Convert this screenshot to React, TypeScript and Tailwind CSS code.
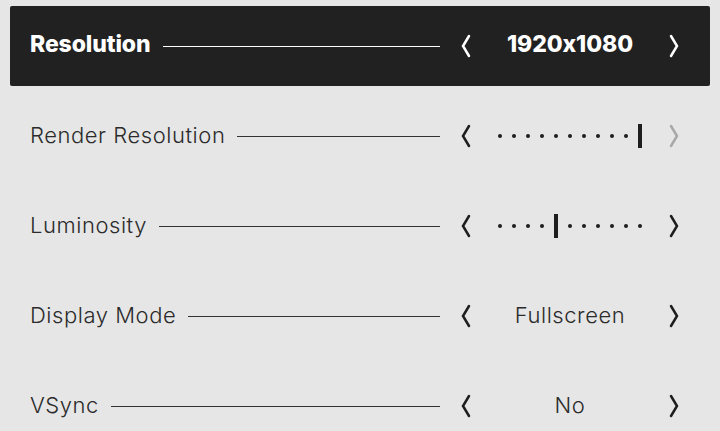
import React from 'react';

type Row = {
  label: string;
  kind: 'text' | 'slider';
  value?: string;
  pos?: number;
  nextDisabled?: boolean;
};

const rows: Row[] = [
  { label: 'Resolution', kind: 'text', value: '1920x1080' },
  { label: 'Render Resolution', kind: 'slider', pos: 10, nextDisabled: true },
  { label: 'Luminosity', kind: 'slider', pos: 4 },
  { label: 'Display Mode', kind: 'text', value: 'Fullscreen' },
  { label: 'VSync', kind: 'text', value: 'No' },
];

function Chevron({ dir, className }: { dir: 'left' | 'right'; className: string }) {
  return (
    <svg width="12" height="24" viewBox="0 0 12 24" className={className} fill="none">
      <path
        d={dir === 'left' ? 'M9 2 L3 12 L9 22' : 'M3 2 L9 12 L3 22'}
        stroke="currentColor"
        strokeWidth={2.5}
        strokeLinecap="round"
        strokeLinejoin="miter"
      />
    </svg>
  );
}

function Slider({ pos, active }: { pos: number; active: boolean }) {
  return (
    <div className="flex h-6 items-center gap-[10px]">
      {Array.from({ length: 11 }).map((_, i) =>
        i === pos ? (
          <span key={i} className={`h-6 w-1 ${active ? 'bg-white' : 'bg-[#1e1e1e]'}`} />
        ) : (
          <span key={i} className={`h-1 w-1 rounded-full ${active ? 'bg-white' : 'bg-[#1e1e1e]'}`} />
        )
      )}
    </div>
  );
}

export default function App() {
  return (
    <div
      className="h-[431px] w-[720px] overflow-hidden bg-[#e6e6e6] px-[10px] pt-[6px]"
      style={{ fontFamily: 'Inter, "Noto Sans", sans-serif', fontFeatureSettings: '"calt" 0' }}
    >
      <div className="flex flex-col gap-[10px]">
        {rows.map((row, idx) => {
          const active = idx === 0;
          return (
            <div
              key={row.label}
              className={`flex h-[80px] shrink-0 items-center rounded-[2px] pl-5 pr-[30px] ${
                active ? 'bg-[#212121] text-white' : 'text-[#2b2b2b]'
              }`}
            >
              <span
                className={`pb-[3px] leading-none ${
                  active ? 'text-[23px] font-extrabold tracking-[-0.1px]' : 'text-[22px] font-light tracking-[0.55px]'
                }`}
              >
                {row.label}
              </span>
              <div className={`ml-3 h-px flex-1 ${active ? 'bg-white' : 'bg-[#333]'}`} />
              <div className="ml-5 flex items-center">
                <Chevron dir="left" className={active ? 'text-white' : 'text-[#1e1e1e]'} />
                <div className="flex w-[196px] items-center justify-center">
                  {row.kind === 'text' ? (
                    <span
                      className={`pb-[3px] leading-none ${
                        active ? 'text-[23px] font-extrabold tracking-[-0.1px]' : 'text-[22px] font-light tracking-[0.55px]'
                      }`}
                    >
                      {row.value}
                    </span>
                  ) : (
                    <Slider pos={row.pos ?? 0} active={active} />
                  )}
                </div>
                <Chevron
                  dir="right"
                  className={active ? 'text-white' : row.nextDisabled ? 'text-[#a8a8a8]' : 'text-[#1e1e1e]'}
                />
              </div>
            </div>
          );
        })}
      </div>
    </div>
  );
}
